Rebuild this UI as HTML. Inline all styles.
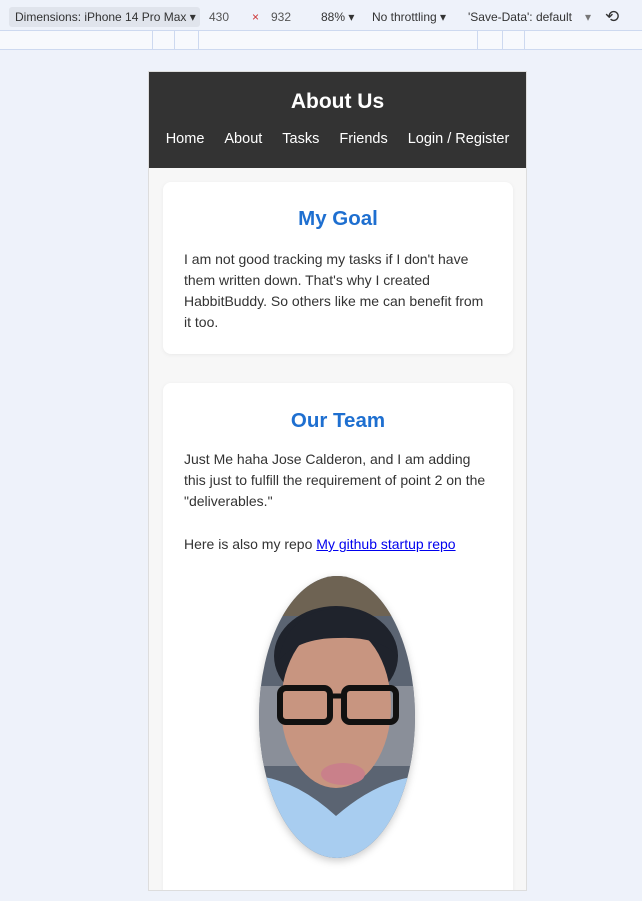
<!DOCTYPE html>
<html><head><style>
*{margin:0;padding:0;box-sizing:border-box}
body{width:642px;height:901px;background:#eef2fa;font-family:"Liberation Sans",sans-serif;position:relative;overflow:hidden}
.tb{position:absolute;top:0;left:0;width:642px;height:30px;background:#eef2fa;font-size:12px;color:#333}
.tb span{position:absolute;top:10px}
.ruler{position:absolute;top:30px;left:0;width:642px;height:20px;background:#f7f9fd;border-top:1px solid #cdd9f0;border-bottom:1px solid #cdd9f0}
.ruler i{position:absolute;top:0;height:19px;border-left:1px solid #cdd9f0}
.vp{position:absolute;left:148px;top:71px;width:379px;height:820px;background:#f7f7f7;border:1px solid #ddd;overflow:hidden}
.hd{background:#333;height:96px;color:#fff;text-align:center}
.hd h1{font-size:21px;padding-top:18px;line-height:24px}
.nav{margin-top:17px;font-size:14.5px;display:flex;justify-content:center;gap:20px}
.card{position:absolute;left:14px;width:350px;background:#fff;border-radius:8px;box-shadow:0 1px 4px rgba(0,0,0,.06);padding:0 21px}
.card h2{color:#1e6fd0;font-size:20.5px;text-align:center}
.card p{font-size:14px;line-height:21px;color:#333}
a{color:#00e;text-decoration:underline}
</style></head><body>
<div class="tb">
<div style="position:absolute;left:9px;top:7px;width:191px;height:20px;background:#e0e4ec;border-radius:3px"></div>
<span style="left:15px">Dimensions: iPhone 14 Pro Max ▾</span>
<span style="left:209px;color:#555">430</span><span style="left:252px;color:#c33">×</span><span style="left:271px;color:#555">932</span>
<span style="left:321px">88% ▾</span><span style="left:372px">No throttling ▾</span>
<span style="left:468px">'Save-Data': default</span><span style="left:585px;color:#777">▾</span>
<span style="left:605px;top:7px;font-size:17px">⟲</span>
</div>
<div class="ruler"><i style="left:152px"></i><i style="left:174px"></i><i style="left:198px"></i><i style="left:477px"></i><i style="left:502px"></i><i style="left:524px"></i></div>
<div class="vp">
<div class="hd"><h1>About Us</h1><div class="nav"><span>Home</span><span>About</span><span>Tasks</span><span>Friends</span><span>Login / Register</span></div></div>
<div class="card" style="top:110px;height:172px">
<h2 style="padding-top:25px;line-height:24px">My Goal</h2>
<p style="margin-top:18px">I am not good tracking my tasks if I don't have them written down. That's why I created HabbitBuddy. So others like me can benefit from it too.</p>
</div>
<div class="card" style="top:311px;height:560px">
<h2 style="padding-top:26px;line-height:24px">Our Team</h2>
<p style="margin-top:16px">Just Me haha Jose Calderon, and I am adding this just to fulfill the requirement of point 2 on the "deliverables."</p>
<p style="margin-top:22px">Here is also my repo <a>My github startup repo</a></p>
<svg width="160" height="284" style="position:absolute;left:95px;top:193px;filter:drop-shadow(0 3px 4px rgba(0,0,0,.2))" viewBox="0 0 160 284">
<defs><clipPath id="c"><ellipse cx="79" cy="141" rx="78" ry="141"/></clipPath></defs>
<g clip-path="url(#c)">
<rect width="160" height="284" fill="#5b6472"/>
<rect y="0" width="160" height="40" fill="#6e6353"/>
<rect y="110" width="160" height="80" fill="#8a8f99"/>
<ellipse cx="78" cy="80" rx="62" ry="50" fill="#1f232c"/>
<ellipse cx="78" cy="130" rx="55" ry="82" fill="#c89580"/>
<path d="M20 85 Q30 35 80 32 Q130 35 140 80 Q120 60 80 62 Q40 62 20 85Z" fill="#1f232c"/>
<path d="M0 200 Q40 205 78 240 Q118 205 160 200 L160 284 L0 284Z" fill="#a8cdf0"/>
<rect x="22" y="112" width="50" height="34" rx="6" fill="none" stroke="#111" stroke-width="6"/>
<rect x="86" y="112" width="52" height="34" rx="6" fill="none" stroke="#111" stroke-width="6"/>
<path d="M72 120 L86 120" stroke="#111" stroke-width="5"/>
<ellipse cx="85" cy="198" rx="22" ry="11" fill="#c9808a"/>
</g>
</svg>
</div>
</div>
</body></html>
